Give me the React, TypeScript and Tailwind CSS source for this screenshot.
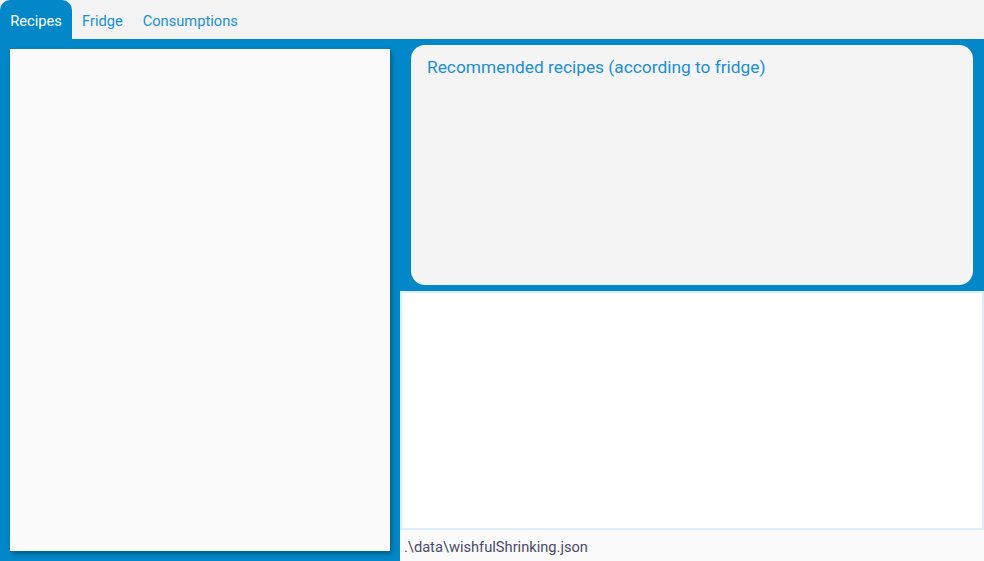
export default function App() {
  return (
    <div className="w-[984px] h-[561px] flex flex-col bg-[#0288c8] overflow-hidden" style={{ fontFamily: "Roboto, 'Liberation Sans', sans-serif" }}>
      <div className="h-[39px] bg-[#f3f3f3] flex items-stretch shrink-0">
        <div className="w-[72px] bg-[#0288c8] rounded-t-[10px] flex items-center justify-center pt-[2px] text-white text-[14.67px]">Recipes</div>
        <div className="pl-[10px] pr-[10px] pt-[2px] flex items-center text-[#1b8fd0] text-[14.67px]">Fridge</div>
        <div className="pl-[10px] pr-[10px] pt-[2px] flex items-center text-[#1b8fd0] text-[14.67px]">Consumptions</div>
      </div>
      <div className="flex-1 flex min-h-0">
        <div className="w-[400px] shrink-0 p-[10px]">
          <div className="w-full h-full bg-[#fafafa] shadow-[2px_3px_5px_rgba(0,0,0,0.3)]"></div>
        </div>
        <div className="flex-1 flex flex-col">
          <div className="h-[252px] pt-[6px] pb-[6px] px-[11px]">
            <div className="h-full bg-[#f4f4f4] rounded-[14px] px-[16px] pt-[10px]">
              <div className="text-[#1b8fd0] text-[17.33px]">Recommended recipes (according to fridge)</div>
            </div>
          </div>
          <div className="h-[239px] bg-white border-2 border-[#ddeefa]"></div>
          <div className="flex-1 bg-[#fafafa] px-[4px] pt-[3px] flex items-center text-[14.67px] text-[#4a4a68]">.\data\wishfulShrinking.json</div>
        </div>
      </div>
    </div>
  );
}
